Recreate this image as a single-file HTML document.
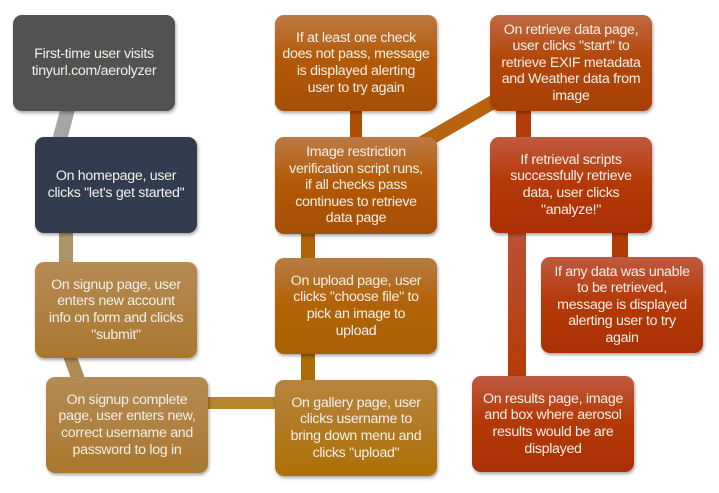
<!DOCTYPE html>
<html><head><meta charset="utf-8"><style>
body{margin:0;width:719px;height:493px;background:#fff;position:relative;overflow:hidden;font-family:"Liberation Sans",sans-serif}
.b{position:absolute;width:162px;height:96px;border-radius:9px;color:#f4f0ea;font-size:14.2px;line-height:16.6px;text-align:center;display:flex;align-items:center;justify-content:center;box-shadow:1px 2px 3px rgba(0,0,0,.35);letter-spacing:-0.3px}
.c{position:absolute}
.g{background:#525252}
.n{background:#323c4f}
.au{background:linear-gradient(#b58b55,#a9782f)}
.or{background:linear-gradient(#bd7a45,#b35a06 45%,#a64e05)}
.og{background:linear-gradient(#b77c43,#b36308 45%,#a86003)}
.rd{background:linear-gradient(#bf5a40,#b53a08 45%,#aa2f05)}
</style></head><body>
<div class="c" style="left:56px;top:110px;width:15px;height:30px;background:#a5a5a5;transform:skewX(-15deg)"></div>
<div class="c" style="left:59px;top:232px;width:14px;height:32px;background:#ad9466"></div>
<div class="c" style="left:67px;top:355px;width:14px;height:25px;background:#ad8c55;transform:skewX(20deg)"></div>
<div class="c" style="left:206px;top:397px;width:73px;height:12px;background:#b5862a"></div>
<div class="c" style="left:301px;top:353px;width:14px;height:30px;background:#ad6c05"></div>
<div class="c" style="left:301px;top:232px;width:14px;height:30px;background:#b26207"></div>
<div class="c" style="left:350px;top:110px;width:12px;height:30px;background:#b04d05"></div>
<div class="c" style="left:410px;top:143px;width:100px;height:14px;background:#b86310;transform:rotate(-30deg);transform-origin:left center"></div>
<div class="c" style="left:516px;top:110px;width:15px;height:30px;background:#b23d08"></div>
<div class="c" style="left:508px;top:232px;width:18px;height:148px;background:linear-gradient(#bc5134,#b53a08)"></div>
<div class="c" style="left:612px;top:232px;width:16px;height:28px;background:#b03c08"></div>

<div class="b g" style="left:13px;top:15px">First-time user visits<br>tinyurl.com/aerolyzer</div>
<div class="b n" style="left:35px;top:137px">On homepage, user<br>clicks "let's get started"</div>
<div class="b au" style="left:35px;top:262px">On signup page, user<br>enters new account<br>info on form and clicks<br>"submit"</div>
<div class="b au" style="left:46px;top:377px">On signup complete<br>page, user enters new,<br>correct username and<br>password to log in</div>
<div class="b og" style="left:275px;top:380px;height:96px;background:linear-gradient(#b6843f,#ad7005)">On gallery page, user<br>clicks username to<br>bring down menu and<br>clicks "upload"</div>
<div class="b og" style="left:275px;top:258px">On upload page, user<br>clicks "choose file" to<br>pick an image to<br>upload</div>
<div class="b or" style="left:275px;top:137px;height:97px">Image restriction<br>verification script runs,<br>if all checks pass<br>continues to retrieve<br>data page</div>
<div class="b or" style="left:275px;top:15px">If at least one check<br>does not pass, message<br>is displayed alerting<br>user to try again</div>
<div class="b rd" style="left:490px;top:15px;background:linear-gradient(#bf6a42,#b3470a 45%,#a84005)">On retrieve data page,<br>user clicks "start" to<br>retrieve EXIF metadata<br>and Weather data from<br>image</div>
<div class="b rd" style="left:490px;top:137px">If retrieval scripts<br>successfully retrieve<br>data, user clicks<br>"analyze!"</div>
<div class="b rd" style="left:541px;top:257px">If any data was unable<br>to be retrieved,<br>message is displayed<br>alerting user to try<br>again</div>
<div class="b rd" style="left:472px;top:376px">On results page, image<br>and box where aerosol<br>results would be are<br>displayed</div>
</body></html>
